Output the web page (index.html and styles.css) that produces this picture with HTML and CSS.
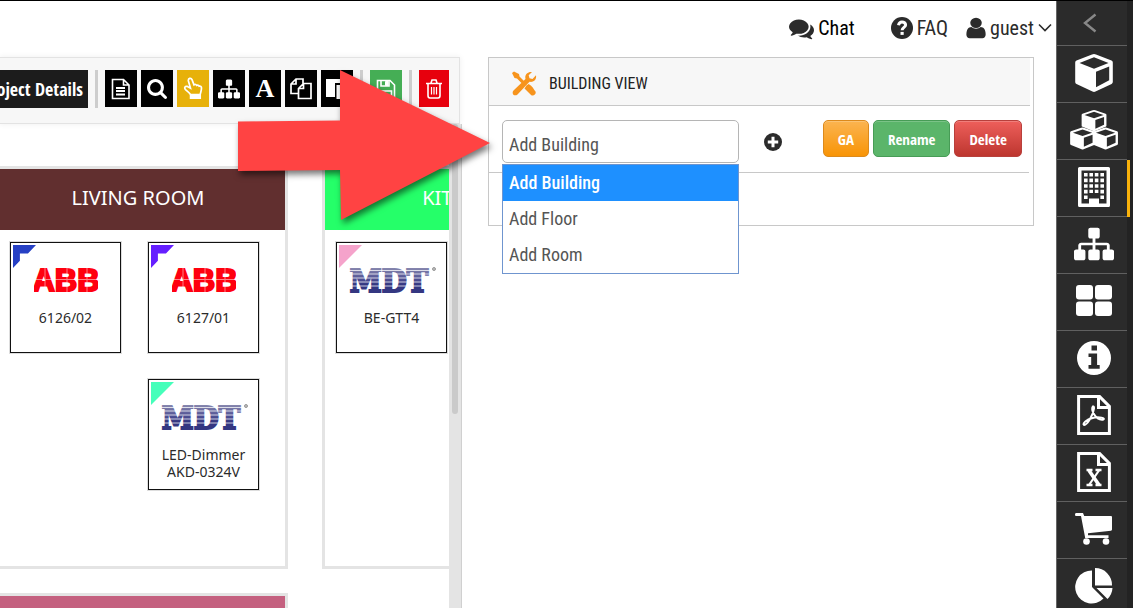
FILE: index.html
```html
<!DOCTYPE html>
<html lang="en">
<head>
<meta charset="utf-8">
<title>Building View</title>
<link rel="stylesheet" href="styles.css">
</head>
<body>
<div class="app">
  <div class="content">
    <header class="topbar">
      <a class="top-link chat" href="#">
        <svg width="25" height="25" viewBox="0 0 1792 1792"><path d="M1408 768q0 139-94 257t-256.500 186.500-353.500 68.500q-86 0-176-16-124 88-278 128-36 9-86 16h-3q-11 0-20.500-8t-11.500-21q-1-3-1-6.500t.5-6.500 2-6l2.500-5 3.500-5.500 4-5 4.500-5 4-4.500q5-6 23-25t26-29.500 22.500-29 25-38.500 20.500-44q-124-72-195-177t-71-224q0-139 94-257t256.500-186.500 353.500-68.500 353.500 68.500 256.500 186.500 94 257zm384 256q0 120-71 224.500t-195 176.500q10 24 20.500 44t25 38.500 22.500 29 26 29.500 23 25q1 1 4 4.500t4.500 5 4 5 3.500 5.500l2.500 5 2 6 .5 6.500-1 6.500q-3 14-13 22t-22 7q-50-7-86-16-154-40-278-128-90 16-176 16-271 0-472-132 58 4 88 4 161 0 309-45t264-129q125-92 192-212t67-254q0-77-23-152 129 71 204 178t75 230z"/></svg>
        <span>Chat</span>
      </a>
      <a class="top-link faq" href="#">
        <svg width="22" height="22" viewBox="0 0 22 22"><circle cx="11" cy="11" r="11"/><path class="knock-line" d="M7.500 8.200C8 5.600 9.300 4.900 11 4.900c2 0 3.600 1.200 3.600 3 0 2.400-3.500 2.500-3.500 5.300" stroke-width="3"/><path class="knock" d="M9.500 14.900h3.200v3H9.500z"/></svg>
        <span>FAQ</span>
      </a>
      <button class="top-link user" type="button">
        <svg width="20" height="22" viewBox="230 80 1330 1640" preserveAspectRatio="none"><path d="M1536 1399q0 109-62.500 187t-150.500 78h-854q-88 0-150.500-78t-62.500-187q0-85 8.500-160.500t31.500-152 58.500-131 94-89 134.500-34.500q131 128 313 128t313-128q76 0 134.500 34.500t94 89 58.500 131 31.500 152 8.500 160.500zm-256-887q0 159-112.500 271.500t-271.500 112.500-271.500-112.500-112.500-271.500 112.500-271.500 271.500-112.500 271.500 112.500 112.500 271.500z"/></svg>
        <span>guest</span>
        <svg class="stroked" width="14" height="10" viewBox="0 0 14 10"><path d="M1 1.500l6 6 6-6" stroke-width="1.600"/></svg>
      </button>
    </header>

    <div class="panes">
      <section class="workspace">
        <div class="toolbar">
          <button class="details" type="button">Project Details</button>
          <span class="divider"></span>
          <button class="tool" type="button" aria-label="Document"><svg class="stroked" width="20" height="22" viewBox="0 0 20 22"><path d="M1.500 1.500h11l5.500 5.500v13.500H1.500zM12.500 1.500V7H18" stroke-width="1.600"/><path d="M5 10h9M5 13h9M5 16.500h9" stroke-width="1.800"/></svg></button>
          <button class="tool" type="button" aria-label="Search"><svg width="20" height="20" viewBox="64 128 1664 1664"><path d="M1216 832q0-185-131.500-316.500t-316.500-131.500-316.500 131.500-131.500 316.500 131.500 316.500 316.500 131.500 316.500-131.500 131.500-316.500zm512 832q0 52-38 90t-90 38q-54 0-90-38l-343-342q-179 124-399 124-143 0-273.500-55.500t-225-150-150-225-55.500-273.500 55.500-273.500 150-225 225-150 273.500-55.500 273.500 55.500 225 150 150 225 55.500 273.500q0 220-124 399l343 343q37 37 37 90z"/></svg></button>
          <button class="tool amber" type="button" aria-label="Pointer"><svg class="stroked" width="20" height="23" viewBox="0 0 20 23"><path d="M7.500 17.500C6 15 4.500 14.600 2.500 12.600c-1.600-1.700-.4-3.700 1.600-3.200 1.300.4 2 1.300 3.400 1.900L5.400 4C4.900 1.300 8 .3 9 2.600l2 5.300c1-.8 2.200-.5 2.700.5 1-.6 2-.2 2.500.9 1.300-.4 2.300.3 2.300 1.800 0 2.500-.8 4-1.300 6.400z" stroke-width="1.700"/><path d="M7.500 18.500h9.800v2.700H7.500z" fill="currentColor" stroke-width="1.500"/></svg></button>
          <button class="tool" type="button" aria-label="Hierarchy"><svg width="22" height="22" viewBox="0 0 1792 1792"><use href="#sitemap"/></svg></button>
          <button class="tool letter" type="button">A</button>
          <button class="tool" type="button" aria-label="Copy"><svg class="stroked" width="22" height="22" viewBox="0 0 22 22"><path d="M8.500 15.500H1V6l5-5h7v4.500M6 1v5H1M8.500 10.500l5-5H21v15H8.500zM13.500 5.500v5h-5" stroke-width="1.700"/></svg></button>
          <button class="tool" type="button" aria-label="Paste"><svg width="22" height="22" viewBox="0 0 22 22"><path d="M0 1h16v4H9v14H0zM10.500 7H22v14H10.500z"/></svg></button>
          <span class="divider"></span>
          <button class="tool green" type="button" aria-label="Save"><svg class="stroked" width="20" height="20" viewBox="0 0 20 20"><path d="M1.500 1.500H14l4.500 4.500v12.500h-17zM4.500 18v-6h11v6" stroke-width="1.600"/><path d="M5 2v5h8V2" stroke-width="1.600"/><path d="M9.500 2.500h2.500v4H9.500z" fill="currentColor" stroke-width="1"/></svg></button>
          <span class="divider"></span>
          <button class="tool red" type="button" aria-label="Delete"><svg class="stroked" width="18" height="20" viewBox="0 0 18 20"><path d="M1 4.500h16M3 4.500v12c0 1.500.8 2.500 2 2.500h8c1.200 0 2-1 2-2.500v-12M6 4l1-3h4l1 3" stroke-width="1.600"/><path d="M6.500 8v7.500M9 8v7.500M11.500 8v7.500" stroke-width="1.200"/></svg></button>
        </div>

        <div class="canvas">
          <div class="rooms">
            <article class="room">
              <h2 class="room-title maroon">LIVING ROOM</h2>
              <div class="devices">
                <div class="device"><i class="tag blue notched"></i><svg class="logo" width="64" height="30" viewBox="0 0 64 30"><use href="#abb"/></svg><span>6126/02</span></div>
                <div class="device"><i class="tag violet notched"></i><svg class="logo" width="64" height="30" viewBox="0 0 64 30"><use href="#abb"/></svg><span>6127/01</span></div>
                <div class="device second"><i class="tag mint"></i><svg class="logo" width="88" height="30" viewBox="0 0 88 30"><use href="#mdt"/></svg><span>LED-Dimmer AKD-0324V</span></div>
              </div>
            </article>
            <article class="room">
              <h2 class="room-title lime">KITCHEN</h2>
              <div class="devices">
                <div class="device"><i class="tag pink"></i><svg class="logo" width="88" height="30" viewBox="0 0 88 30"><use href="#mdt"/></svg><span>BE-GTT4</span></div>
              </div>
            </article>
            <article class="room"><h2 class="room-title rose"></h2></article>
          </div>
          <div class="track"><div class="thumb"></div></div>
        </div>
      </section>

      <main class="detail">
        <section class="card">
          <h1 class="card-title">
            <svg width="26" height="25" viewBox="0 0 26 25"><path d="M1 2l2-1.500 5 2.500.5 2.500 4.500 4.500-2 2.500-5-5L3.500 7zM25 4.200c.8 4.500-2.500 7.500-6.500 6.600L6.500 23.500c-3.300 2.500-6.400-1.200-4-4L14.500 8C13.300 3.500 17 .2 21 1l-3.300 3.300.8 3 3 .7zM15.500 14.500l2.200-1.500c4 2.500 4.500 4.500 6.800 7.500 1 2.500-1.800 5-4.200 3.700l-6.800-6.800z"/></svg>
            BUILDING VIEW
          </h1>
          <div class="row">
            <div class="picker">
              <select class="picker-field" aria-label="Add item"><option>Add Building</option><option>Add Floor</option><option>Add Room</option></select>
              <ul class="menu" role="listbox" aria-label="Add item">
                <li class="option selected" role="option" aria-selected="true">Add Building</li>
                <li class="option" role="option">Add Floor</li>
                <li class="option" role="option">Add Room</li>
              </ul>
            </div>
            <button class="plus" type="button" aria-label="Add"><svg width="18" height="18" viewBox="0 0 18 18"><circle cx="9" cy="9" r="9"/><path class="knock" d="M7.500 3.800h3v3.700h3.700v3h-3.700v3.700h-3v-3.700H3.800v-3h3.700z"/></svg></button>
            <div class="actions">
              <button class="btn orange" type="button">GA</button>
              <button class="btn leaf" type="button">Rename</button>
              <button class="btn crimson" type="button">Delete</button>
            </div>
          </div>
        </section>
      </main>
    </div>
  </div>

  <nav class="sidebar" aria-label="Views">
    <a class="side collapse" href="#" aria-label="Collapse"><svg class="stroked" width="14" height="20" viewBox="0 0 14 20"><path d="M12.500 1.500L2 10l10.500 8.500" stroke-width="2.400"/></svg></a>
    <a class="side" href="#" aria-label="Product"><svg width="38" height="38" viewBox="0 0 38 38"><use href="#cube"/></svg></a>
    <a class="side" href="#" aria-label="Products"><svg width="48" height="40" viewBox="0 0 48 40"><use href="#cube" transform="translate(11.500 0) scale(.66 .56)"/><use href="#cube" transform="translate(0 17.500) scale(.66 .58)"/><use href="#cube" transform="translate(23 17.500) scale(.66 .58)"/></svg></a>
    <a class="side active" href="#" aria-label="Building"><svg width="32" height="40" viewBox="0 0 32 40"><path fill-rule="evenodd" d="M1.500 0h29q1.500 0 1.500 1.500v37q0 1.500-1.500 1.500h-29Q0 40 0 38.500v-37Q0 0 1.500 0zM3.500 3.500v33H11v-5h10v5h7.500v-33z"/><path d="M7.800 6v26M13.200 6v20M18.600 6v20M24.200 6v26" fill="none" stroke="currentColor" stroke-width="3.600" stroke-dasharray="3.600 2"/></svg></a>
    <a class="side" href="#" aria-label="Hierarchy"><svg width="40" height="38" viewBox="0 0 1792 1792" preserveAspectRatio="none"><use href="#sitemap"/></svg></a>
    <a class="side" href="#" aria-label="Grid"><svg width="36" height="31" viewBox="0 0 36 31"><rect width="17" height="14.500" rx="3"/><rect x="19" width="17" height="14.500" rx="3"/><rect y="16.500" width="17" height="14.500" rx="3"/><rect x="19" y="16.500" width="17" height="14.500" rx="3"/></svg></a>
    <a class="side" href="#" aria-label="Information"><svg width="34" height="34" viewBox="0 0 34 34"><path fill-rule="evenodd" d="M17 0a17 17 0 1 1 0 34 17 17 0 0 1 0-34zM14.500 4.500v5h5.500v-5zM11.500 12.500v3.600h2.700v8h-2.700v3.600h11.200v-3.600h-2.600V12.500z"/></svg></a>
    <a class="side" href="#" aria-label="PDF export"><svg class="stroked" width="34" height="40" viewBox="0 0 34 40"><use href="#sheet"/><path d="M15.800 11.500c-2 3 2.500 14 10 13.200 4-1.300-4-3.700-11-1.500-5 1.200-9.500 5.500-8 6.600 3 1 9.500-9.500 10.200-16.500.1-1.500-.6-2.300-1.200-1.800z" stroke-width="2"/></svg></a>
    <a class="side" href="#" aria-label="Excel export"><svg class="stroked" width="34" height="40" viewBox="0 0 34 40"><use href="#sheet"/><path d="M12 18.500l10 14.500" stroke-width="3.600"/><path d="M22 18.500L12 33" stroke-width="2.200"/><path d="M9.500 18h6M18.500 18h6M9.500 33h6M18.500 33h6" stroke-width="2.400"/></svg></a>
    <a class="side" href="#" aria-label="Cart"><svg width="37" height="32" viewBox="0 0 37 32"><path d="M1 0h7l1.200 3H36q1 0 1 1v12.500q0 1-1 1.200L13 20.300v2h20.500V25H10.200L6 3H1Q0 3 0 1.500 0 0 1 0z"/><circle cx="11.500" cy="28.500" r="3.300"/><circle cx="31" cy="28.500" r="3.300"/></svg></a>
    <a class="side" href="#" aria-label="Statistics"><svg width="38" height="36" viewBox="0 0 38 36"><path d="M17 2.500V19l11.500 11.500A16.500 16.500 0 1 1 17 2.500zM20 0a17 17 0 0 1 17 17.500H20zM21.500 20H37.500a17 17 0 0 1-5 11z"/></svg></a>
  </nav>
</div>

<svg class="callout" width="252" height="152" viewBox="0 0 252 152" aria-hidden="true"><path d="M0 51.500l102-1V0l150 73-149 77-1-50-102 1z"/></svg>

<svg class="defs" width="0" height="0" aria-hidden="true">
  <defs>
    <path id="sitemap" d="M1792 1248v320q0 40-28 68t-68 28h-320q-40 0-68-28t-28-68v-320q0-40 28-68t68-28h96v-192h-512v192h96q40 0 68 28t28 68v320q0 40-28 68t-68 28h-320q-40 0-68-28t-28-68v-320q0-40 28-68t68-28h96v-192h-512v192h96q40 0 68 28t28 68v320q0 40-28 68t-68 28h-320q-40 0-68-28t-28-68v-320q0-40 28-68t68-28h96v-192q0-52 38-90t90-38h512v-192h-96q-40 0-68-28t-28-68v-320q0-40 28-68t68-28h320q40 0 68 28t28 68v320q0 40-28 68t-68 28h-96v192h512q52 0 90 38t38 90v192h96q40 0 68 28t28 68z"/>
    <path id="cube" fill-rule="evenodd" d="M19 0q1 0 2 .5l15.500 6q1.300.6 1.300 2V28q0 1.200-1.200 2L20.500 37.500q-1.500.8-3 0L1.500 30Q.2 29.300.2 28V8.500q0-1.400 1.300-2L17 .5q1-.5 2-.5zM19 3.300L4.500 9 19 14.800 33.500 9zM21 17.800v15.500l13.200-7V12.500z"/>
    <path id="sheet" d="M1.600 1.600h21l9.800 9.800v27H1.600zM21.500 1.600v11h11" fill="none" stroke-width="3"/>
    <g id="abb">
      <text class="abb-text" x="32" y="26" text-anchor="middle">ABB</text>
      <path class="gap-line" d="M0 14.500h64M11 0v30M33 0v30M53 0v30"/>
    </g>
    <linearGradient id="ink" x1="0" y1="0" x2="0" y2="1"><stop offset="0" stop-color="#a5a5bd"/><stop offset=".45" stop-color="#4f5093"/><stop offset=".6" stop-color="#343781"/></linearGradient>
    <g id="mdt">
      <text class="mdt-text" x="41" y="27" text-anchor="middle">MDT</text>
      <path class="stripe" d="M0 5.500h82M0 9h82M0 13h82M0 17h82M0 21h82"/>
      <circle cx="86" cy="4" r="1.500" fill="#bbb" stroke="#999" stroke-width="1"/>
    </g>
  </defs>
</svg>
</body>
</html>
```

FILE: styles.css
```css
* { box-sizing: border-box; }

:root {
  --narrow: "Roboto Condensed", "Liberation Sans Narrow", "Liberation Sans", sans-serif;
  --narrow-bold: "Open Sans Condensed", "Roboto Condensed", "Liberation Sans", sans-serif;
  --line: #c8c8c8;
}

body {
  margin: 0;
  background: #fff;
  color: #222;
  font-family: var(--narrow);
  font-size: 18px;
  overflow: hidden;
}

button { font: inherit; border: 0; padding: 0; cursor: pointer; }
a { color: inherit; text-decoration: none; }
svg { display: block; fill: currentColor; flex: none; }
.stroked { fill: none; stroke: currentColor; }
.knock { fill: #fff; }
.knock-line { fill: none; stroke: #fff; }
.defs { position: absolute; }

.app { display: flex; height: 100vh; border-top: 1px solid #000; }
.content { flex: 1; min-width: 0; display: flex; flex-direction: column; }

.topbar {
  height: 56px;
  display: flex;
  justify-content: flex-end;
  align-items: center;
  padding: 0 4px 2px 0;
  font-size: 20px;
}
.top-link { display: flex; align-items: center; gap: 4px; background: none; color: #2b2b2b; }
.chat { color: #000; margin-right: 36px; }
.chat svg { color: #2b2b2b; }
.faq { margin-right: 18px; }

.panes { flex: 1; min-height: 0; display: grid; grid-template-columns: 462fr 594fr; }
.workspace { min-width: 0; min-height: 0; display: flex; flex-direction: column; }

.toolbar {
  height: 67px;
  flex: none;
  margin-right: 2px;
  display: flex;
  justify-content: flex-end;
  align-items: center;
  gap: 4px;
  padding: 0 10px 4px 0;
  overflow: hidden;
  background: #f7f7f7;
  border: 1px solid #e3e3e3;
  border-left: 0;
  box-shadow: 0 0 6px #eee;
}
.details {
  flex: none;
  height: 38px;
  padding: 0 5px;
  background: #1c1c1c;
  color: #fff;
  font: bold 18px var(--narrow-bold);
}
.divider {
  flex: none;
  width: 3px;
  height: 38px;
  margin: 0 3px;
  background: #cdcdcd;
}
.tool {
  flex: none;
  width: 32px;
  height: 37px;
  display: grid;
  place-items: center;
  background: #000;
  color: #fff;
}
.amber { background: #e7b10a; }
.green { background: #45ae55; }
.red { width: 30px; background: #e7000d; }
.letter { font: bold 26px "Liberation Serif", serif; }

.canvas { flex: 1; min-height: 0; display: flex; border-right: 1px solid #d0d0d0; }
.rooms {
  flex: 1;
  min-width: 0;
  overflow: hidden;
  display: grid;
  grid-template-columns: 292px 292px;
  grid-template-rows: 403px 403px;
  gap: 24px 34px;
  margin-left: -4px;
  padding-top: 42px;
}
.room { border: 3px solid #e4e4e4; }
.room-title {
  margin: 0;
  height: 61px;
  padding: 0 8px 4px 0;
  display: grid;
  place-items: center;
  color: #fff;
  font: 20px "Noto Sans", sans-serif;
}
.maroon { background: #612f2f; }
.lime { background: #25ff69; }
.rose { background: #c4607f; }

.devices {
  display: grid;
  grid-template-columns: 111px 111px;
  gap: 26px 27px;
  padding: 12px 11px;
}
.device {
  position: relative;
  height: 111px;
  padding-top: 22px;
  border: 1px solid #111;
  outline: 1px solid #ddd;
  color: #2b2b2b;
  font: 14px/17px "Noto Sans", sans-serif;
  text-align: center;
}
.second { grid-column: 2; }
.logo { margin: 0 auto 14px; }
.tag {
  position: absolute;
  left: 2px;
  top: 2px;
  width: 23px;
  height: 23px;
  clip-path: polygon(0 0, 100% 0, 0 100%);
}
.notched { clip-path: polygon(0 0, 100% 0, 65% 37%, 30% 37%, 30% 68%, 0 100%); }
.blue { background: #2640c4; }
.violet { background: #651fff; }
.mint { background: #45ffba; }
.pink { background: #f5a3cb; }

.abb-text { font: bold 31px "Liberation Sans", sans-serif; fill: #ff000f; stroke: #ff000f; stroke-width: 2px; }
.gap-line { stroke: #fff; stroke-width: 1px; opacity: .5; }
.mdt-text { font: bold 32px "DejaVu Serif Condensed", "DejaVu Serif", serif; fill: url(#ink); stroke: url(#ink); stroke-width: 2px; }
.stripe { stroke: #fff; stroke-width: 1px; opacity: .75; }

.track { width: 12px; padding: 0 3px; background: #e4e4e4; }
.thumb { height: 60%; border-radius: 4px; background: #cacaca; }

.detail { padding: 0 22px 0 26px; }
.card { border: 1px solid var(--line); padding-bottom: 52px; }
.card-title {
  margin: 0 3px 0 0;
  height: 48px;
  display: flex;
  align-items: center;
  gap: 12px;
  padding: 4px 22px 0;
  background: #f7f7f7;
  border-bottom: 1px solid var(--line);
  font-size: 16px;
  font-weight: normal;
}
.card-title svg { color: #f7941d; }
.row {
  display: flex;
  align-items: flex-start;
  margin-right: 4px;
  padding: 14px 7px 9px 13px;
  border-bottom: 1px solid var(--line);
}
.picker { position: relative; flex: 0 1 237px; }
.picker-field {
  display: block;
  appearance: none;
  width: 100%;
  height: 43px;
  margin: 0;
  padding: 6px 6px 0;
  border: 1px solid #b5b5b5;
  border-radius: 5px;
  background: #fff;
  color: #555;
  font: 18px var(--narrow);
}
.menu {
  position: absolute;
  top: 100%;
  left: 0;
  right: 0;
  margin: 1px 0 0;
  padding: 0;
  list-style: none;
  background: #fff;
  border: 1px solid #6f95cf;
}
.option { padding: 0 6px; line-height: 36px; color: #555; }
.selected { background: #1e90ff; color: #fff; font-weight: 500; }
.plus { margin: 13px 0 0 25px; background: none; color: #2b2b2b; }
.actions { display: flex; gap: 4px; margin-left: auto; }
.btn {
  height: 37px;
  padding: 0 14px;
  border: 1px solid;
  border-radius: 5px;
  color: #fff;
  font: bold 15px var(--narrow-bold);
  box-shadow: inset 0 1px 0 #ffffff33;
}
.orange { background: linear-gradient(#fbb450, #f89406); border-color: #dc8a1c; }
.leaf { background: #5bb56a; border-color: #479c56; }
.crimson { background: linear-gradient(#ee5f5b, #bd362f); border-color: #b8403c; }

.sidebar {
  flex: 0 0 77px;
  overflow: clip;
  overflow-clip-margin: border-box;
  border-left: 1px solid #666;
  border-right: 6px solid #232323;
  background: #2b2b2b;
  color: #fff;
}
.side {
  height: 57px;
  display: grid;
  place-items: center;
  padding: 0 0 3px 3px;
  border-bottom: 1px solid #606060;
}
.collapse { height: 45px; padding: 0 4px 0 0; color: #888; }
.active { box-shadow: 3px 0 0 #f9b20b; }

.callout {
  position: absolute;
  left: 238px;
  top: 70px;
  fill: #ff4343;
  overflow: visible;
  filter: drop-shadow(2px 4px 3px #0008);
}
```
